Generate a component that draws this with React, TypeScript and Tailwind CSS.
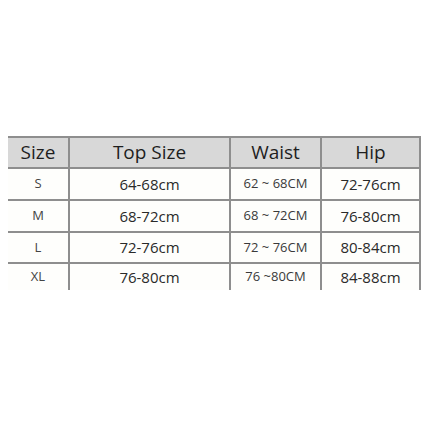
import React from 'react';

const ROWS = [
  { size: 'S', top: '64-68cm', waist: '62 ~ 68CM', hip: '72-76cm' },
  { size: 'M', top: '68-72cm', waist: '68 ~ 72CM', hip: '76-80cm' },
  { size: 'L', top: '72-76cm', waist: '72 ~ 76CM', hip: '80-84cm' },
  { size: 'XL', top: '76-80cm', waist: '76 ~80CM', hip: '84-88cm' },
];

const HEIGHTS = ['h-[32px]', 'h-[32px]', 'h-[31px]', 'h-[26px]'];

export default function App() {
  return (
    <div className="h-[428px] w-[428px] bg-white pt-[136px] pl-2 font-['Open_Sans',sans-serif]">
      <div className="w-[413px] border-t-2 border-[#8e8e8e]">
        <div className="grid h-[31px] grid-cols-[62px_161px_91px_99px] border-b-2 border-[#8e8e8e] bg-[#d8d8d8] text-[19px] text-[#1e1e1e]">
          <div className="flex items-center justify-center border-r-2 border-[#8e8e8e]">Size</div>
          <div className="flex items-center justify-center border-r-2 border-[#8e8e8e]">Top Size</div>
          <div className="flex items-center justify-center border-r-2 border-[#8e8e8e]">Waist</div>
          <div className="flex items-center justify-center border-r-2 border-[#8e8e8e]">Hip</div>
        </div>
        {ROWS.map((row, i) => (
          <div
            key={row.size}
            className={`grid grid-cols-[62px_161px_91px_99px] bg-[#fefefc] ${HEIGHTS[i]} ${i < 3 ? 'border-b-2 border-[#8e8e8e]' : ''}`}
          >
            <div className="flex items-center justify-center border-r-2 border-[#8e8e8e] text-[13px] text-[#444]">{row.size}</div>
            <div className="flex items-center justify-center border-r-2 border-[#8e8e8e] text-[15px] text-[#2a2a2a]">{row.top}</div>
            <div className="flex items-center justify-center border-r-2 border-[#8e8e8e] text-[13px] text-[#3a3a3a]">{row.waist}</div>
            <div className="flex items-center justify-center border-r-2 border-[#8e8e8e] text-[15px] text-[#2a2a2a]">{row.hip}</div>
          </div>
        ))}
      </div>
    </div>
  );
}
